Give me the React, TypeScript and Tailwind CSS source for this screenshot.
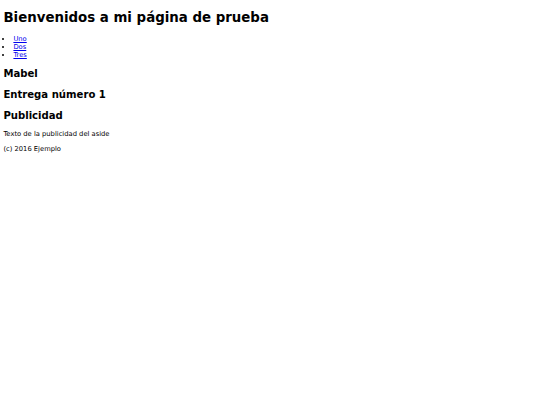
export default function App() {
  return (
    <div className="m-[3.4px] font-['DejaVu_Sans',sans-serif] text-[6.75px] leading-[1.2] text-black bg-white">
      <header>
        <h1 className="text-[13.35px] font-bold mt-[10px] mb-[9px] leading-[1.2]">Bienvenidos a mi página de prueba</h1>
        <nav>
          <ul className="list-disc pl-[9px] mt-[7.9px] mb-[6.75px] ml-[1px]">
            <li><a href="#" className="text-[#0000ee] underline">Uno</a></li>
            <li><a href="#" className="text-[#0000ee] underline">Dos</a></li>
            <li><a href="#" className="text-[#0000ee] underline">Tres</a></li>
          </ul>
        </nav>
      </header>
      <section>
        <h2 className="text-[10.1px] font-bold my-[8.7px] leading-[1.2]">Mabel</h2>
        <article>
          <h2 className="text-[10.1px] font-bold my-[8.7px] leading-[1.2]">Entrega número 1</h2>
        </article>
      </section>
      <aside>
        <h2 className="text-[10.1px] font-bold my-[8.7px] leading-[1.2]">Publicidad</h2>
        <p className="my-[7px]">Texto de la publicidad del aside</p>
      </aside>
      <footer>
        <p className="my-[7px]">(c) 2016 Ejemplo</p>
      </footer>
    </div>
  );
}
